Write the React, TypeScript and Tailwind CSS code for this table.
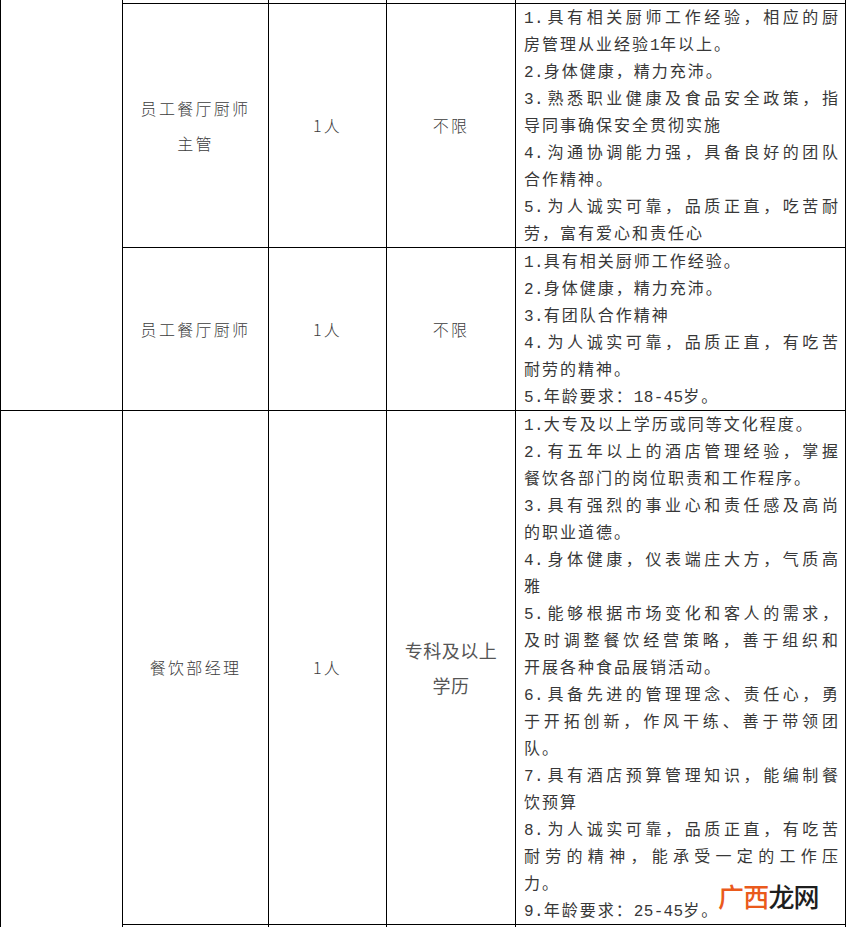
const descFont = {
  fontFamily: '"Liberation Mono", "Noto Sans CJK SC", monospace',
};

type Line = { t: string; j?: boolean };

const row1: Line[] = [
  { t: "1.具有相关厨师工作经验，相应的厨", j: true },
  { t: "房管理从业经验1年以上。" },
  { t: "2.身体健康，精力充沛。" },
  { t: "3.熟悉职业健康及食品安全政策，指", j: true },
  { t: "导同事确保安全贯彻实施" },
  { t: "4.沟通协调能力强，具备良好的团队", j: true },
  { t: "合作精神。" },
  { t: "5.为人诚实可靠，品质正直，吃苦耐", j: true },
  { t: "劳，富有爱心和责任心" },
];

const row2: Line[] = [
  { t: "1.具有相关厨师工作经验。" },
  { t: "2.身体健康，精力充沛。" },
  { t: "3.有团队合作精神" },
  { t: "4.为人诚实可靠，品质正直，有吃苦", j: true },
  { t: "耐劳的精神。" },
  { t: "5.年龄要求：18-45岁。" },
];

const row3: Line[] = [
  { t: "1.大专及以上学历或同等文化程度。" },
  { t: "2.有五年以上的酒店管理经验，掌握", j: true },
  { t: "餐饮各部门的岗位职责和工作程序。" },
  { t: "3.具有强烈的事业心和责任感及高尚", j: true },
  { t: "的职业道德。" },
  { t: "4.身体健康，仪表端庄大方，气质高", j: true },
  { t: "雅" },
  { t: "5.能够根据市场变化和客人的需求，", j: true },
  { t: "及时调整餐饮经营策略，善于组织和", j: true },
  { t: "开展各种食品展销活动。" },
  { t: "6.具备先进的管理理念、责任心，勇", j: true },
  { t: "于开拓创新，作风干练、善于带领团", j: true },
  { t: "队。" },
  { t: "7.具有酒店预算管理知识，能编制餐", j: true },
  { t: "饮预算" },
  { t: "8.为人诚实可靠，品质正直，有吃苦", j: true },
  { t: "耐劳的精神，能承受一定的工作压", j: true },
  { t: "力。" },
  { t: "9.年龄要求：25-45岁。" },
];

// digits and dots keep tight spacing, like the half-width glyphs in the scan
function Text({ t }: { t: string }) {
  const parts = t.split(/([0-9.\-]+)/);
  return (
    <>
      {parts.map((p, i) =>
        /^[0-9.\-]+$/.test(p) ? (
          <span key={i} className="tracking-[0.3px]">
            {p}
          </span>
        ) : (
          p
        )
      )}
    </>
  );
}

function Desc({ lines }: { lines: Line[] }) {
  return (
    <div
      className="bg-white pl-[8px] pr-[7px] pt-[2px] text-[16px] leading-[27px] tracking-[2px] text-[#383838] whitespace-nowrap"
      style={descFont}
    >
      {lines.map((l, i) => (
        <div
          key={i}
          className={l.j ? "text-justify [text-align-last:justify] tracking-normal" : ""}
        >
          <Text t={l.t} />
        </div>
      ))}
    </div>
  );
}

function Center({ children, serif }: { children: React.ReactNode; serif?: boolean }) {
  return (
    <div
      className={
        "bg-white flex flex-col items-center justify-center text-center leading-[35px] " +
        (serif
          ? "text-[18px] text-[#555] tracking-[0.5px]"
          : "text-[16px] text-[#3c3c3c] tracking-[2.3px] font-light")
      }
      style={{ fontFamily: '"Noto Sans CJK SC", "Noto Sans", sans-serif' }}
    >
      {children}
    </div>
  );
}

export default function App() {
  return (
    <div className="relative h-[927px] w-[848px] overflow-hidden bg-white">
      <div className="grid w-[846px] grid-cols-[121px_145px_117px_128px_329px] grid-rows-[3px_243px_162px_513px_20px] gap-px bg-black px-px">
        {/* first column, spans */}
        <div className="col-start-1 row-start-1 row-span-3 bg-white" />

        {/* cut-off row above */}
        <div className="bg-white" />
        <div className="bg-white" />
        <div className="bg-white" />
        <div className="bg-white" />

        {/* 员工餐厅厨师主管 */}
        <Center>
          <div>员工餐厅厨师</div>
          <div>主管</div>
        </Center>
        <Center>1人</Center>
        <Center>不限</Center>
        <Desc lines={row1} />

        {/* 员工餐厅厨师 */}
        <Center>员工餐厅厨师</Center>
        <Center>1人</Center>
        <Center>不限</Center>
        <Desc lines={row2} />

        <div className="col-start-1 row-start-4 row-span-2 bg-white" />

        {/* 餐饮部经理 */}
        <Center>餐饮部经理</Center>
        <Center>1人</Center>
        <Center serif>
          <div>专科及以上</div>
          <div>学历</div>
        </Center>
        <Desc lines={row3} />

        {/* next row, cut off */}
        <div className="bg-white" />
        <div className="bg-white" />
        <div className="bg-white" />
        <div className="bg-white" />
      </div>

      {/* watermark */}
      <div
        className="absolute left-[718px] top-[879px] text-[26px] font-medium leading-[34px] tracking-[-0.8px]"
        style={{ fontFamily: '"Noto Sans CJK SC", sans-serif' }}
      >
        <span className="text-[#ea5a1c]">广西</span>
        <span className="text-[#1e1e1e]">龙网</span>
      </div>
    </div>
  );
}
